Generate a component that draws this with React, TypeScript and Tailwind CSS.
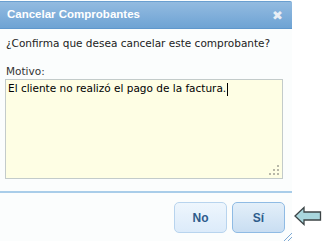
import React from "react";

export default function App() {
  return (
    <div className="w-[323px] h-[241px] bg-white relative overflow-hidden [font-family:'DejaVu_Sans',sans-serif]">
      <div className="w-[292px] h-[241px] bg-[#fbfdfd] flex flex-col relative">
        <div className="mt-[1px] h-[28px] border-t border-[#6a9fd0] border-b border-b-[#5f97cc] bg-gradient-to-b from-[#93bbe0] to-[#6ea3d4] flex items-center justify-between px-[7px] rounded-tr-[2px]">
          <span className="text-white font-bold text-[11.5px] leading-none [font-family:'Liberation_Sans',Arial,sans-serif]">Cancelar Comprobantes</span>
          <span className="text-[#e8eef5] font-bold text-[13px] leading-none mr-[2px]">✖</span>
        </div>
        <div className="px-[6px] pt-[7px] text-[10.5px] text-[#222]">
          <div className="leading-[14px]">¿Confirma que desea cancelar este comprobante?</div>
          <div className="mt-[14px] leading-[14px] text-[#333]">Motivo:</div>
          <div className="relative mt-[1px] w-[278px] h-[100px] -ml-[1px] border border-[#c3cbca] bg-[#fefee4] px-[2px] pt-[1px]">
            <span className="text-black text-[10.5px]">El cliente no realizó el pago de la factura.</span>
            <span className="inline-block w-[1px] h-[13px] bg-black align-middle ml-[1px]" />
            <svg className="absolute right-[3px] bottom-[3px]" width="10" height="10" viewBox="0 0 10 10">
              <rect x="8" y="0" width="2" height="2" fill="#b8b8a8" />
              <rect x="4" y="4" width="2" height="2" fill="#b8b8a8" />
              <rect x="8" y="4" width="2" height="2" fill="#b8b8a8" />
              <rect x="0" y="8" width="2" height="2" fill="#b8b8a8" />
              <rect x="4" y="8" width="2" height="2" fill="#b8b8a8" />
              <rect x="8" y="8" width="2" height="2" fill="#b8b8a8" />
            </svg>
          </div>
        </div>
        <div className="mt-[12px] border-t-2 border-[#a9cde9]" />
        <div className="flex justify-end gap-[5px] pr-[7px] pt-[9px] [font-family:'Liberation_Sans',Arial,sans-serif]">
          <button className="w-[53px] h-[31px] rounded-[5px] border border-[#b8d4ee] bg-gradient-to-b from-[#eef6fd] to-[#dcebfa] text-[#2d5c8c] font-bold text-[12px] [font-family:'Liberation_Sans',Arial,sans-serif]">No</button>
          <button className="w-[53px] h-[31px] rounded-[5px] border border-[#8fbbe4] bg-gradient-to-b from-[#e3eff9] to-[#c9def2] text-[#2d5c8c] font-bold text-[12px] [font-family:'Liberation_Sans',Arial,sans-serif]">Sí</button>
        </div>
        <svg className="absolute right-0 bottom-0" width="10" height="10" viewBox="0 0 10 10">
          <line x1="2" y1="10" x2="10" y2="2" stroke="#7fa9d4" strokeWidth="1" />
          <line x1="6" y1="10" x2="10" y2="6" stroke="#7fa9d4" strokeWidth="1" />
        </svg>
      </div>
      <svg className="absolute left-[294px] top-[206px]" width="28" height="20" viewBox="0 0 28 20">
        <path d="M1 10 L10 1.5 L10 6 L26.5 6 L26.5 14 L10 14 L10 18.5 Z" fill="#a9d7de" stroke="#3c4446" strokeWidth="1.3" strokeLinejoin="miter" />
      </svg>
    </div>
  );
}
